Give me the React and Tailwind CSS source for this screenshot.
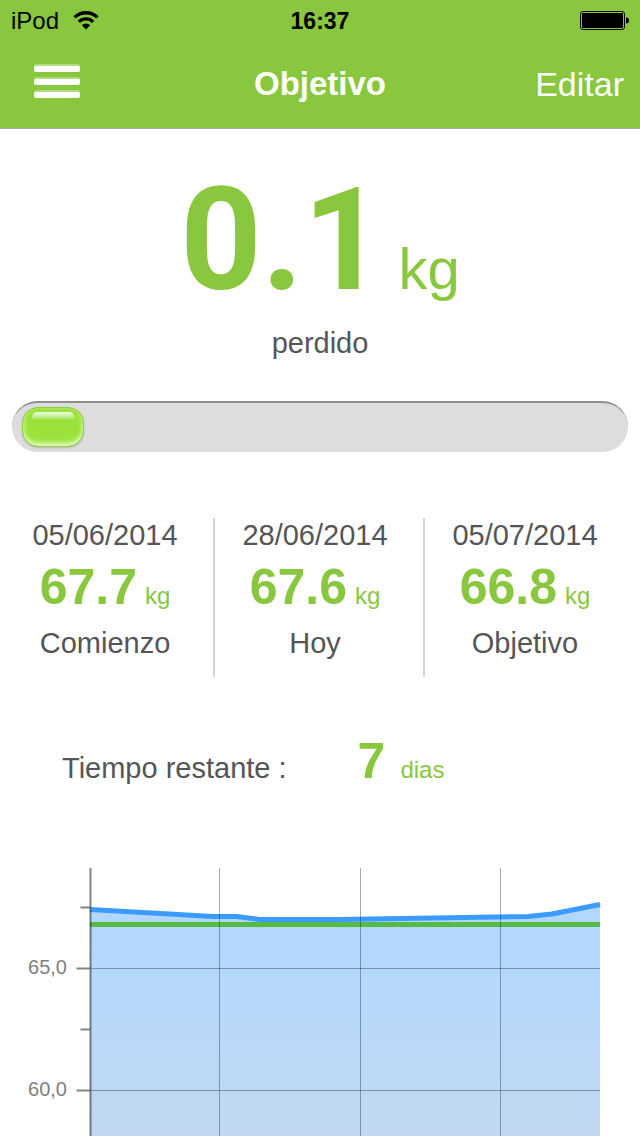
import React from "react";

const STATS = [
  { date: "05/06/2014", value: "67.7", label: "Comienzo" },
  { date: "28/06/2014", value: "67.6", label: "Hoy" },
  { date: "05/07/2014", value: "66.8", label: "Objetivo" },
];

const PROGRESS = 10;

// weight curve, in chart units
const CURVE = "90,41.5 213,48.5 237,48.5 260,51.5 340,51.5 528,48.5 552,46 600,36.5";

const WifiIcon = () => (
  <svg width="26" height="20" viewBox="0 0 26 20" fill="none" stroke="#000" strokeWidth="3.4" aria-hidden="true">
    <path d="M1.6 6.4a16.2 16.2 0 0 1 22.8 0" />
    <path d="M5.8 10.9a10.2 10.2 0 0 1 14.4 0" />
    <path d="M13 18.4l-4.2-4.2a5.9 5.9 0 0 1 8.4 0z" fill="#000" stroke="none" />
  </svg>
);

const BatteryIcon = () => (
  <svg width="50" height="20" viewBox="0 0 50 20" aria-hidden="true">
    <rect x="1.5" y="0.5" width="44" height="18" rx="2.5" fill="none" stroke="#000" />
    <rect x="3" y="2" width="41" height="15" rx="1" />
    <path d="M47 6.5c2 0 3 1.2 3 3s-1 3-3 3z" />
  </svg>
);

const MenuIcon = () => (
  <svg width="46" height="34" viewBox="0 0 46 34" fill="#fff" aria-hidden="true">
    {[0, 13, 26].map((y) => (
      <g key={y}>
        <rect y={y} width="46" height="6" rx="2" opacity="0.35" />
        <rect y={y + 2} width="46" height="6" rx="2" />
      </g>
    ))}
  </svg>
);

const Stat = ({ date, value, label }) => (
  <div className="border-l-2 border-[#d4d4d4] first:border-transparent pr-2 pt-px pb-[18px] text-center">
    <div className="text-[29px] leading-8">{date}</div>
    <div className="mt-2 flex items-baseline justify-center gap-2 text-[#88c73e]">
      <span className="text-[50px] leading-14 font-bold">{value}</span>
      <span className="text-[24px]">kg</span>
    </div>
    <div className="mt-3 text-[29px] leading-8">{label}</div>
  </div>
);

const WeightChart = () => (
  <svg className="block w-full" viewBox="0 0 640 268" role="img" aria-label="Peso">
    <defs>
      <linearGradient id="area" x1="0" y1="0" x2="0" y2="1">
        <stop offset="0" stopColor="#b1d7ff" />
        <stop offset="0.42" stopColor="#b6d8fb" />
        <stop offset="1" stopColor="#c2d8f1" />
      </linearGradient>
    </defs>
    <polygon points={`${CURVE} 600,268 90,268`} fill="url(#area)" />
    <polyline points={CURVE} fill="none" stroke="#3c9bff" strokeWidth="5" />
    <line x1="90" x2="600" y1="56.5" y2="56.5" stroke="#55bb45" strokeWidth="5" />

    {/* grid */}
    <g stroke="#1a2c40" strokeOpacity="0.4">
      {[219.5, 360.5, 500.5].map((x) => (
        <line key={x} x1={x} x2={x} y1="0" y2="268" />
      ))}
      {[100.5, 222.5].map((y) => (
        <line key={y} x1="91" x2="600" y1={y} y2={y} />
      ))}
    </g>

    {/* y axis */}
    <g stroke="#333" strokeOpacity="0.6" strokeWidth="2">
      <line x1="90.5" x2="90.5" y1="0" y2="268" />
      <line x1="80.5" x2="90" y1="39.5" y2="39.5" />
      <line x1="76.5" x2="90" y1="100.5" y2="100.5" />
      <line x1="80.5" x2="90" y1="161.5" y2="161.5" />
      <line x1="76.5" x2="90" y1="222.5" y2="222.5" />
    </g>
    <g fill="#808080" fontSize="20" textAnchor="end">
      <text x="67" y="106">65,0</text>
      <text x="67" y="228">60,0</text>
    </g>
  </svg>
);

const App = () => {
  return (
    <div className="bg-white text-[#555] font-['Liberation_Sans',Arial,sans-serif]">
      <header className="bg-[#88c73e] border-b border-[#aaa]">
        <div className="h-10 px-[11px] pt-[2px] grid grid-cols-3 items-center text-[24px] leading-9 text-black">
          <div className="flex items-center gap-[14px]">
            <span>iPod</span>
            <WifiIcon />
          </div>
          <div className="text-center text-[23px] font-bold">16:37</div>
          <div className="flex justify-end">
            <BatteryIcon />
          </div>
        </div>
        <div className="h-[88px] px-4 grid grid-cols-[1fr_auto_1fr] items-center text-[34px] text-white">
          <button type="button" className="justify-self-start pl-[18px] pb-[6px]" aria-label="Menú">
            <MenuIcon />
          </button>
          <h1 className="text-[33px] font-bold">Objetivo</h1>
          <button type="button" className="justify-self-end">Editar</button>
        </div>
      </header>

      <main>
        <div className="mt-10 flex items-baseline justify-center gap-[14px] text-[#88c73e]">
          <span className="text-[142px] leading-36 font-bold font-[Roboto,'Liberation_Sans',sans-serif]">0.1</span>
          <span className="text-[58px] leading-14">kg</span>
        </div>
        <p className="mt-[14px] text-center text-[29px] leading-8">perdido</p>

        <div
          className="mt-[42px] mx-3 h-[51px] px-[10px] pt-1 rounded-full bg-[#ddd] border-t-2 border-[#8e8e93]"
          role="progressbar"
          aria-label="Progreso"
          aria-valuenow={PROGRESS}
        >
          <div
            className="h-10 pt-1 rounded-[16px] bg-[#9be33a] border border-[#8fd040] shadow-[inset_0_-3px_5px_#e6fbcb,inset_0_0_3px_#b4ea70,0_1px_2px_#bbb]"
            style={{ width: `calc(${PROGRESS}% + 2px)` }}
          >
            <div className="mx-[9px] h-2 rounded-t-[5px] bg-linear-to-b from-[#f4fee8] to-[#9be33a]" />
          </div>
        </div>

        <section className="mt-[66px] ml-[3px] mr-[7px] grid grid-cols-3">
          {STATS.map((stat) => (
            <Stat key={stat.label} {...stat} />
          ))}
        </section>

        <div className="mt-14 pl-[62px] flex items-baseline text-[#88c73e]">
          <span className="text-[29px] text-[#555]">Tiempo restante :</span>
          <span className="ml-[71px] text-[50px] leading-14 font-bold">7</span>
          <span className="ml-[15px] text-[24px]">dias</span>
        </div>

        <div className="mt-[77px]">
          <WeightChart />
        </div>
      </main>
    </div>
  );
};

export default App;
